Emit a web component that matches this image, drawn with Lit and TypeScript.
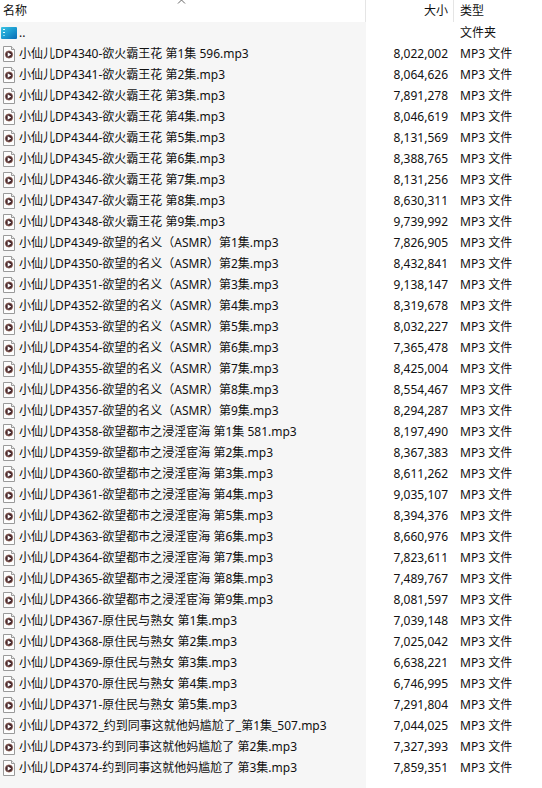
import { LitElement, html, css } from "lit";
import { customElement } from "lit/decorators.js";

interface FileRow {
  name: string;
  size: string;
}

const FILES: FileRow[] = [
  ["小仙儿DP4340-欲火霸王花 第1集 596.mp3", "8,022,002"],
  ["小仙儿DP4341-欲火霸王花 第2集.mp3", "8,064,626"],
  ["小仙儿DP4342-欲火霸王花 第3集.mp3", "7,891,278"],
  ["小仙儿DP4343-欲火霸王花 第4集.mp3", "8,046,619"],
  ["小仙儿DP4344-欲火霸王花 第5集.mp3", "8,131,569"],
  ["小仙儿DP4345-欲火霸王花 第6集.mp3", "8,388,765"],
  ["小仙儿DP4346-欲火霸王花 第7集.mp3", "8,131,256"],
  ["小仙儿DP4347-欲火霸王花 第8集.mp3", "8,630,311"],
  ["小仙儿DP4348-欲火霸王花 第9集.mp3", "9,739,992"],
  ["小仙儿DP4349-欲望的名义（ASMR）第1集.mp3", "7,826,905"],
  ["小仙儿DP4350-欲望的名义（ASMR）第2集.mp3", "8,432,841"],
  ["小仙儿DP4351-欲望的名义（ASMR）第3集.mp3", "9,138,147"],
  ["小仙儿DP4352-欲望的名义（ASMR）第4集.mp3", "8,319,678"],
  ["小仙儿DP4353-欲望的名义（ASMR）第5集.mp3", "8,032,227"],
  ["小仙儿DP4354-欲望的名义（ASMR）第6集.mp3", "7,365,478"],
  ["小仙儿DP4355-欲望的名义（ASMR）第7集.mp3", "8,425,004"],
  ["小仙儿DP4356-欲望的名义（ASMR）第8集.mp3", "8,554,467"],
  ["小仙儿DP4357-欲望的名义（ASMR）第9集.mp3", "8,294,287"],
  ["小仙儿DP4358-欲望都市之浸淫宦海 第1集 581.mp3", "8,197,490"],
  ["小仙儿DP4359-欲望都市之浸淫宦海 第2集.mp3", "8,367,383"],
  ["小仙儿DP4360-欲望都市之浸淫宦海 第3集.mp3", "8,611,262"],
  ["小仙儿DP4361-欲望都市之浸淫宦海 第4集.mp3", "9,035,107"],
  ["小仙儿DP4362-欲望都市之浸淫宦海 第5集.mp3", "8,394,376"],
  ["小仙儿DP4363-欲望都市之浸淫宦海 第6集.mp3", "8,660,976"],
  ["小仙儿DP4364-欲望都市之浸淫宦海 第7集.mp3", "7,823,611"],
  ["小仙儿DP4365-欲望都市之浸淫宦海 第8集.mp3", "7,489,767"],
  ["小仙儿DP4366-欲望都市之浸淫宦海 第9集.mp3", "8,081,597"],
  ["小仙儿DP4367-原住民与熟女 第1集.mp3", "7,039,148"],
  ["小仙儿DP4368-原住民与熟女 第2集.mp3", "7,025,042"],
  ["小仙儿DP4369-原住民与熟女 第3集.mp3", "6,638,221"],
  ["小仙儿DP4370-原住民与熟女 第4集.mp3", "6,746,995"],
  ["小仙儿DP4371-原住民与熟女 第5集.mp3", "7,291,804"],
  ["小仙儿DP4372_约到同事这就他妈尴尬了_第1集_507.mp3", "7,044,025"],
  ["小仙儿DP4373-约到同事这就他妈尴尬了 第2集.mp3", "7,327,393"],
  ["小仙儿DP4374-约到同事这就他妈尴尬了 第3集.mp3", "7,859,351"],
].map(([name, size]) => ({ name, size }));

const folderIcon = html`<svg class="icon" width="16" height="16" viewBox="0 0 16 16" aria-hidden="true">
  <defs>
    <linearGradient id="folder" x1="0" y1="0" x2="1" y2="1">
      <stop offset="0" stop-color="#3cc4e4" />
      <stop offset="0.5" stop-color="#1c9bd0" />
      <stop offset="1" stop-color="#0a6ab4" />
    </linearGradient>
  </defs>
  <rect x="0" y="2" width="16" height="12" rx="1" fill="url(#folder)" />
  <path d="M2 4h2v1H2zM2 7h2v1H2z" fill="#e4fafe" />
  <path d="M2 10h2v1H2z" fill="#7fd8ee" />
</svg>`;

const mediaIcon = html`<svg class="icon" width="16" height="16" viewBox="0 0 16 16" aria-hidden="true">
  <path d="M2.500 .5h8l3 3v12h-11z" fill="#fdfdfd" stroke="#9a9a9a" />
  <path d="M10.500 .5v3h3" fill="#ececec" stroke="#9a9a9a" />
  <circle cx="8" cy="8.500" r="3.600" fill="#43242a" stroke="#8a5a4c" stroke-width=".8" />
  <path d="M6.700 6.200v4.600l3.500-2.300z" fill="#fff" />
</svg>`;

@customElement("app-root")
export class AppRoot extends LitElement {
  static styles = css`
    :host {
      --side: 88px;
      display: block;
      min-height: 100vh;
      color: #111;
      background: linear-gradient(#f6f6f6, #f6f6f6) left / calc(100% - 2 * var(--side)) 100% no-repeat #fff;
      font: 12px/20px "Noto Sans", "Noto Sans CJK SC", sans-serif;
    }
    .files {
      width: 100%;
      table-layout: fixed;
      border-collapse: separate;
      border-spacing: 0;
    }
    .side {
      width: var(--side);
    }
    th,
    td {
      box-sizing: border-box;
      padding: 0;
      font-weight: 400;
      text-align: left;
      white-space: nowrap;
      vertical-align: middle;
    }
    th {
      position: relative;
      height: 22px;
      background: #fff;
    }
    td {
      height: 21px;
    }
    .divided {
      border-right: 1px solid #e5e5e5;
    }
    .sort {
      display: block;
      width: 100%;
      padding: 0 3px;
      border: 0;
      background: none;
      color: inherit;
      font: inherit;
      line-height: 20px;
      text-align: inherit;
    }
    .caret {
      position: absolute;
      top: 0;
      left: calc(50% - 6px);
    }
    th.size .sort {
      padding: 0 5px;
    }
    .size {
      text-align: right;
    }
    td.size {
      padding-right: 6px;
    }
    .type,
    th.type .sort {
      padding-left: 6px;
    }
    th.type {
      padding-left: 0;
    }
    .name {
      display: flex;
      align-items: center;
      gap: 2px;
      padding-left: 1px;
      overflow: hidden;
    }
    .icon {
      flex: none;
    }
  `;

  private row(icon: unknown, name: string, size: string, type: string) {
    return html`<tr>
      <td><div class="name">${icon}<span>${name}</span></div></td>
      <td class="size">${size}</td>
      <td class="type">${type}</td>
    </tr>`;
  }

  render() {
    return html`<table class="files">
      <colgroup>
        <col />
        <col class="side" />
        <col class="side" />
      </colgroup>
      <thead>
        <tr>
          <th class="divided" scope="col" aria-sort="ascending">
            <button class="sort" type="button">名称</button>
            <svg class="caret" width="9" height="4" viewBox="0 0 9 4" aria-hidden="true">
              <path d="M1 3.500 4.500 0 8 3.500" fill="none" stroke="#666" />
            </svg>
          </th>
          <th class="size divided" scope="col"><button class="sort" type="button">大小</button></th>
          <th class="type" scope="col"><button class="sort" type="button">类型</button></th>
        </tr>
      </thead>
      <tbody>
        ${this.row(folderIcon, "..", "", "文件夹")}
        ${FILES.map((f) => this.row(mediaIcon, f.name, f.size, "MP3 文件"))}
      </tbody>
    </table>`;
  }
}
